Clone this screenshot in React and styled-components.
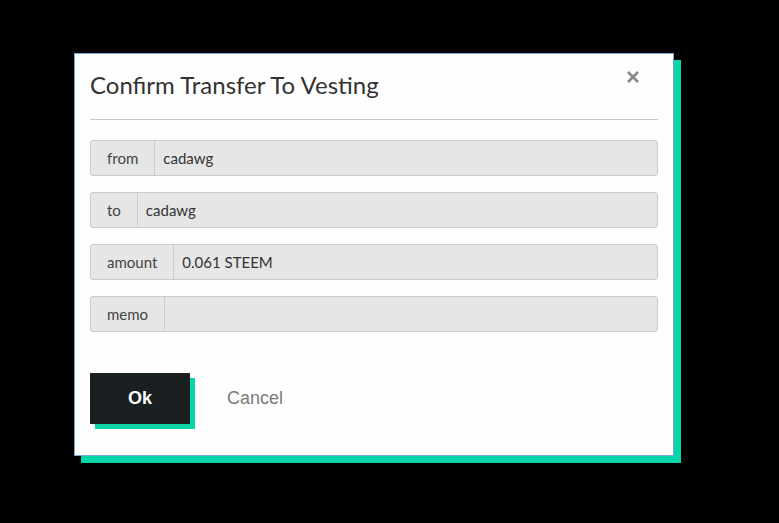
import React from 'react'
import styled, { createGlobalStyle } from 'styled-components'

const GlobalStyle = createGlobalStyle`
   html, body {
      margin: 0;
      background: #000;
   }
   body {
      font-family: Lato, "Liberation Sans", sans-serif;
   }
`

const Backdrop = styled.div`
   width: 779px;
   height: 523px;
   padding: 53px 0 0 74px;
   box-sizing: border-box;
`

const Modal = styled.div`
   position: relative;
   width: 600px;
   height: 403px;
   box-sizing: border-box;
   background: #fefefe;
   border: 1px solid #7aa7d6;
   box-shadow: 7px 7px 0 0 #06d6a9;
   padding: 14px 15px 0 15px;
`

const Title = styled.h3`
   margin: 0;
   padding: 2px 0 20px 0;
   font-size: 24px;
   font-weight: 400;
   color: #333;
   border-bottom: 1px solid #cacaca;
`

const Close = styled.button`
   position: absolute;
   top: 14px;
   right: 31px;
   background: none;
   border: none;
   padding: 0;
   cursor: pointer;
   width: 18px;
   height: 18px;
   display: flex;
   align-items: center;
   justify-content: center;
`

const Fields = styled.div`
   display: flex;
   flex-direction: column;
   gap: 16px;
   margin-top: 20px;
`

const Group = styled.div`
   display: flex;
   height: 36px;
   box-sizing: border-box;
   border: 1px solid #cbcbcb;
   border-radius: 3px;
   background: #e6e6e6;
   font-size: 15px;
   color: #333;
`

const Label = styled.span`
   display: flex;
   align-items: center;
   padding: 0 16px;
   border-right: 1px solid #cbcbcb;
   color: #444;
`

const Value = styled.span`
   display: flex;
   align-items: center;
   padding: 0 8px;
   flex: 1;
`

const Actions = styled.div`
   display: flex;
   align-items: center;
   gap: 37px;
   margin-top: 41px;
`

const OkButton = styled.button`
   width: 100px;
   height: 51px;
   background: #1a1f22;
   color: #fff;
   border: none;
   font-family: "Liberation Sans", Arial, sans-serif;
   font-weight: 700;
   font-size: 18px;
   box-shadow: 5px 5px 0 0 #06d6a9;
   cursor: pointer;
`

const CancelButton = styled.button`
   background: none;
   border: none;
   padding: 0;
   color: #7a7a7a;
   font-family: "Liberation Sans", Arial, sans-serif;
   font-size: 18px;
   cursor: pointer;
`

const fields = [
   { label: 'from', value: 'cadawg' },
   { label: 'to', value: 'cadawg' },
   { label: 'amount', value: '0.061 STEEM' },
   { label: 'memo', value: '' },
]

const App = () => {
   return (
      <>
         <GlobalStyle />
         <Backdrop>
            <Modal>
               <Close aria-label="close">
                  <svg width="14" height="14" viewBox="0 0 14 14">
                     <path d="M2 2 L12 12 M12 2 L2 12" stroke="#888" strokeWidth="2.6" strokeLinecap="butt" />
                  </svg>
               </Close>
               <Title>Confirm Transfer To Vesting</Title>
               <Fields>
                  {fields.map(f => (
                     <Group key={f.label}>
                        <Label>{f.label}</Label>
                        <Value>{f.value}</Value>
                     </Group>
                  ))}
               </Fields>
               <Actions>
                  <OkButton>Ok</OkButton>
                  <CancelButton>Cancel</CancelButton>
               </Actions>
            </Modal>
         </Backdrop>
      </>
   )
}

export default App
